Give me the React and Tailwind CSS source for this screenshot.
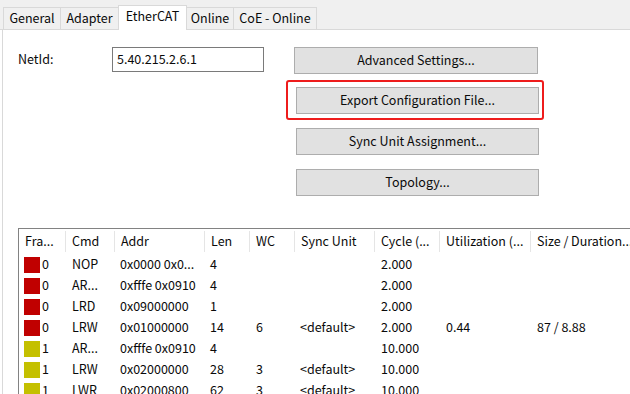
import React from 'react';

const tabs = [
  { t: 'General', w: 'w-[58px]' },
  { t: 'Adapter', w: 'w-[59px]' },
  { t: 'EtherCAT', w: 'w-[69px]' },
  { t: 'Online', w: 'w-[48px]' },
  { t: 'CoE - Online', w: 'w-[84px]' },
];

const cols = ['Fra...', 'Cmd', 'Addr', 'Len', 'WC', 'Sync Unit', 'Cycle (...', 'Utilization (...', 'Size / Duration...'];

const rows = [
  { c: 'red', f: '0', cmd: 'NOP', addr: '0x0000 0x0...', len: '4', wc: '', sync: '', cycle: '2.000', util: '', size: '' },
  { c: 'red', f: '0', cmd: 'AR...', addr: '0xfffe 0x0910', len: '4', wc: '', sync: '', cycle: '2.000', util: '', size: '' },
  { c: 'red', f: '0', cmd: 'LRD', addr: '0x09000000', len: '1', wc: '', sync: '', cycle: '2.000', util: '', size: '' },
  { c: 'red', f: '0', cmd: 'LRW', addr: '0x01000000', len: '14', wc: '6', sync: '<default>', cycle: '2.000', util: '0.44', size: '87 / 8.88' },
  { c: 'yellow', f: '1', cmd: 'AR...', addr: '0xfffe 0x0910', len: '4', wc: '', sync: '', cycle: '10.000', util: '', size: '' },
  { c: 'yellow', f: '1', cmd: 'LRW', addr: '0x02000000', len: '28', wc: '3', sync: '<default>', cycle: '10.000', util: '', size: '' },
  { c: 'yellow', f: '1', cmd: 'LWR', addr: '0x02000800', len: '62', wc: '3', sync: '<default>', cycle: '10.000', util: '', size: '' },
];

const grid = 'grid grid-cols-[46px_49px_90px_45px_45px_80px_65px_91px_140px]';

const Button = ({ label, className = '' }) => (
  <div className={`h-[27px] w-[243px] flex items-center justify-center bg-[#e1e1e1] border border-[#adadad] ${className}`}>
    {label}
  </div>
);

const App = () => {
  return (
    <div className="w-[630px] h-[394px] overflow-hidden bg-white text-[12.5px] text-[#0a0a0a] flex flex-col font-['Noto_Sans_CJK_SC','Noto_Sans',sans-serif]">
      <div className="shrink-0 h-[30px] bg-[#f0f0f0] flex items-end pl-[3px] border-b border-[#d9d9d9]">
        {tabs.map(({ t, w }) =>
          t === 'EtherCAT' ? (
            <div key={t} className={`${w} h-[25px] -mb-px -ml-px bg-white border border-b-0 border-[#d9d9d9] flex items-center justify-center pb-[3px]`}>
              {t}
            </div>
          ) : (
            <div key={t} className={`${w} h-[22px] bg-[#f0f0f0] border border-b-0 border-[#d9d9d9] -ml-px first:ml-0 flex items-center justify-center`}>
              {t}
            </div>
          )
        )}
      </div>

      <div className="flex-1 min-h-0 ml-[2px] border-l border-[#d9d9d9] bg-white flex flex-col">
        <div className="shrink-0 flex pt-[17px]">
          <div className="flex items-start w-[283px]">
            <div className="w-[109px] pl-[15px] h-[25px] flex items-center">NetId:</div>
            <div className="w-[152px] h-[25px] border border-[#7a7a7a] flex items-center pl-[4px]">5.40.215.2.6.1</div>
          </div>
          <div className="flex flex-col">
            <Button label="Advanced Settings..." className="ml-[8px] w-[244px]" />
            <div className="mt-[6px] w-[258px] h-[40px] border-2 border-[#ee1c1c] rounded-[3px] pl-[8px] pt-[5px]">
              <Button label="Export Configuration File..." className="w-[243px]" />
            </div>
            <Button label="Sync Unit Assignment..." className="mt-[8px] ml-[10px]" />
            <Button label="Topology..." className="mt-[14px] ml-[10px]" />
          </div>
        </div>

        <div className="mt-[32px] ml-[15px] flex-1 min-h-0 border-l border-t border-[#828282] overflow-hidden">
          <div className={`${grid} h-[25px]`}>
            {cols.map((c, i) => (
              <div key={c} className={`flex items-center pl-[6px] whitespace-nowrap ${i > 0 ? 'border-l border-[#e5e5e5] my-[2px]' : ''}`}>
                {c}
              </div>
            ))}
          </div>
          {rows.map((r, i) => (
            <div key={i} className={`${grid} h-[21px] items-center whitespace-nowrap`}>
              <div className="flex items-center pl-[5px] gap-[2px]">
                <span className={`w-[16px] h-[16px] ${r.c === 'red' ? 'bg-[#c00000]' : 'bg-[#c4c000]'}`} />
                <span>{r.f}</span>
              </div>
              <div className="pl-[7px]">{r.cmd}</div>
              <div className="pl-[6px]">{r.addr}</div>
              <div className="pl-[6px]">{r.len}</div>
              <div className="pl-[7px]">{r.wc}</div>
              <div className="pl-[6px]">{r.sync}</div>
              <div className="pl-[7px]">{r.cycle}</div>
              <div className="pl-[7px]">{r.util}</div>
              <div className="pl-[7px]">{r.size}</div>
            </div>
          ))}
        </div>
      </div>
    </div>
  );
};

export default App;
